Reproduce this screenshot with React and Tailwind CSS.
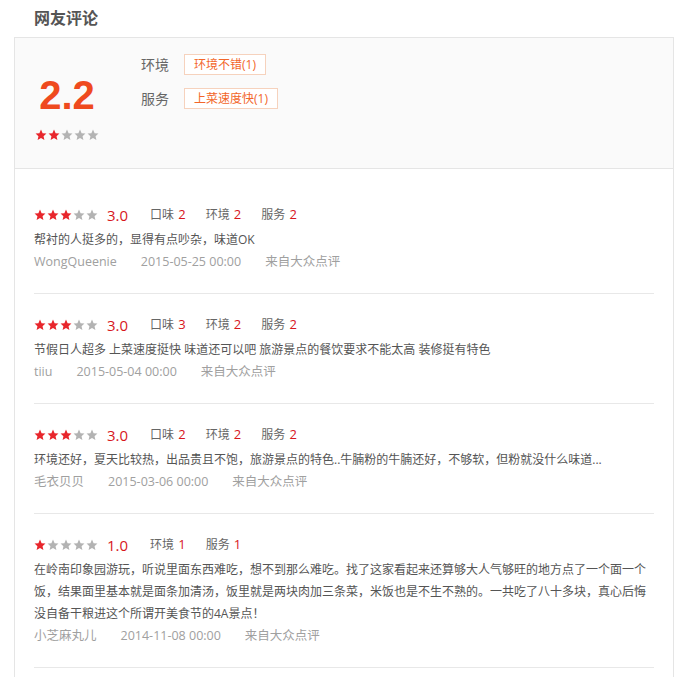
import React from 'react';

const reviews = [
  {
    stars: 3,
    score: '3.0',
    items: [['口味', 2], ['环境', 2], ['服务', 2]],
    text: '帮衬的人挺多的，显得有点吵杂，味道OK',
    user: 'WongQueenie',
    date: '2015-05-25 00:00',
  },
  {
    stars: 3,
    score: '3.0',
    items: [['口味', 3], ['环境', 2], ['服务', 2]],
    text: '节假日人超多 上菜速度挺快 味道还可以吧 旅游景点的餐饮要求不能太高 装修挺有特色',
    user: 'tiiu',
    date: '2015-05-04 00:00',
  },
  {
    stars: 3,
    score: '3.0',
    items: [['口味', 2], ['环境', 2], ['服务', 2]],
    text: '环境还好，夏天比较热，出品贵且不饱，旅游景点的特色..牛腩粉的牛腩还好，不够软，但粉就没什么味道...',
    user: '毛衣贝贝',
    date: '2015-03-06 00:00',
  },
  {
    stars: 1,
    score: '1.0',
    items: [['环境', 1], ['服务', 1]],
    text: '在岭南印象园游玩，听说里面东西难吃，想不到那么难吃。找了这家看起来还算够大人气够旺的地方点了一个面一个饭，结果面里基本就是面条加清汤，饭里就是两块肉加三条菜，米饭也是不生不熟的。一共吃了八十多块，真心后悔没自备干粮进这个所谓开美食节的4A景点！',
    user: '小芝麻丸儿',
    date: '2014-11-08 00:00',
  },
];

const Star = ({ on }) => (
  <svg viewBox="0 0 24 24" className={`w-[12px] h-[12px] ${on ? 'fill-[#e8262c]' : 'fill-[#b3b3b3]'}`}>
    <path d="M12 1.2l3.2 7.1 7.7.8-5.8 5.3 1.7 7.7L12 18.1l-6.8 4 1.7-7.7L1.1 9.1l7.7-.8z" />
  </svg>
);

const Stars = ({ n }) => (
  <div className="flex gap-[1px]">
    {[0, 1, 2, 3, 4].map((i) => (
      <Star key={i} on={i < n} />
    ))}
  </div>
);

// Single review block
const Review = ({ r }) => (
  <div className="pt-[17px] pb-[20px] border-b border-[#e8e8e8]">
    <div className="flex items-center h-[28px]">
      <Stars n={r.stars} />
      <span className="ml-[9px] text-[15px] text-[#d7161d] leading-[28px]">{r.score}</span>
      <div className="flex ml-[22px] gap-[20px] text-[12px] text-[#666]">
        {r.items.map(([k, v]) => (
          <span key={k}>
            {k} <span className="ml-[1px] text-[13px] text-[#d7161d]">{v}</span>
          </span>
        ))}
      </div>
    </div>
    <p className="text-[12px] leading-[22px] text-[#555]">{r.text}</p>
    <div className="flex gap-[24px] text-[12.5px] leading-[22px] text-[#a0a0a0]">
      <span>{r.user}</span>
      <span>{r.date}</span>
      <span>来自大众点评</span>
    </div>
  </div>
);

const App = () => {
  return (
    <div className="bg-white min-h-screen font-['Open_Sans','Noto_Sans_CJK_SC',sans-serif]">
      <h2 className="pl-[34px] pt-[8px] h-[37px] text-[16px] leading-[20px] font-bold text-[#555]">网友评论</h2>

      <div className="mx-[14px] border border-[#e5e5e5] pb-[40px]">
        {/* Summary */}
        <div className="flex h-[131px] bg-[#fafafa] border-b border-[#e5e5e5]">
          <div className="ml-[19px] w-[66px] flex flex-col items-center">
            <div className="mt-[37px] text-[40px] leading-[40px] font-bold text-[#ef4a1e] font-['Liberation_Sans',sans-serif]">2.2</div>
            <div className="mt-[14px]">
              <Stars n={2} />
            </div>
          </div>
          <div className="ml-[41px] pt-[16px] flex flex-col gap-[13px]">
            <div className="flex items-center">
              <span className="text-[14px] text-[#666] w-[43px]">环境</span>
              <span className="h-[21px] px-[9px] border border-[#f6d2bd] bg-white text-[12px] leading-[19px] text-[#f2662a]">环境不错(1)</span>
            </div>
            <div className="flex items-center">
              <span className="text-[14px] text-[#666] w-[43px]">服务</span>
              <span className="h-[21px] px-[9px] border border-[#f6d2bd] bg-white text-[12px] leading-[19px] text-[#f2662a]">上菜速度快(1)</span>
            </div>
          </div>
        </div>

        {/* Review list */}
        <div className="px-[19px] pt-[15px]">
          {reviews.map((r, i) => (
            <Review key={i} r={r} />
          ))}
        </div>
      </div>
    </div>
  );
};

export default App;
